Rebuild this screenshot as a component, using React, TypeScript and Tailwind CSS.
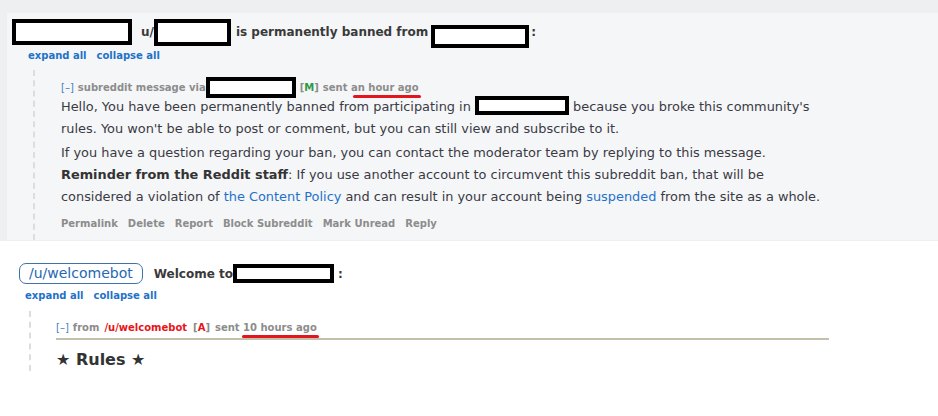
const blueLink = "text-[#1f72c9]";

function Redacted({ className }: { className: string }) {
  return (
    <span
      className={`inline-block shrink-0 border-[4px] border-black bg-white align-middle ${className}`}
    />
  );
}

function Scribble({ className }: { className: string }) {
  return (
    <span
      className={`pointer-events-none absolute h-[3px] rounded-full bg-[#e3161d] ${className}`}
    />
  );
}

function ExpandLinks({ className }: { className: string }) {
  return (
    <div className={`flex gap-[10px] text-[10px] font-bold ${blueLink} ${className}`}>
      <span>expand all</span>
      <span>collapse all</span>
    </div>
  );
}

const ACTIONS = ["Permalink", "Delete", "Report", "Block Subreddit", "Mark Unread", "Reply"];

export default function App() {
  return (
    <div className="min-h-screen bg-white font-['DejaVu_Sans',Verdana,sans-serif] text-[#333]">
      {/* ban message */}
      <div className="bg-[#eeeff1] pl-[7px] pt-[13px]">
        <div className="flex h-[227px] flex-col overflow-hidden bg-[#f5f6f8] pl-[5px]">
          <div className="flex h-[38px] items-center text-[12px] font-bold text-[#3a3a3a]">
            <Redacted className="h-[26px] w-[120px]" />
            <span className="ml-[9px]">u/</span>
            <Redacted className="h-[27px] w-[77px]" />
            <span className="ml-[5px]">is permanently banned from</span>
            <Redacted className="ml-[3px] mt-[8px] h-[23px] w-[98px]" />
            <span className="ml-[2px]">:</span>
          </div>
          <ExpandLinks className="ml-[16px] mt-[-3px]" />
          <div className="ml-[21px] mt-[7px] flex-1 border-l-2 border-dashed border-[#dcdde0] pl-[26px] pt-[7px]">
            <div className="flex items-center text-[10px] font-bold text-[#8c8c8c]">
              <span className="font-normal text-[#3f7fc6]">[–]</span>
              <span className="ml-[4px]">subreddit message via</span>
              <Redacted className="h-[21px] w-[90px]" />
              <span className="ml-[4px]">
                [<span className="text-[#2f9a45]">M</span>]
              </span>
              <span className="relative ml-[4px]">
                sent an hour ago
                <Scribble className="left-[30px] right-[-2px] top-[15px]" />
              </span>
            </div>
            <div className="mt-[-2px] w-[775px] text-[12.9px] leading-[22px] text-[#3a3a44]">
              <p>
                Hello, You have been permanently banned from participating in{" "}
                <Redacted className="mt-[-4px] h-[19px] w-[94px]" /> because you broke this
                community's rules. You won't be able to post or comment, but you can still view
                and subscribe to it.
              </p>
              <p className="mt-[2px]">
                If you have a question regarding your ban, you can contact the moderator team by
                replying to this message.
              </p>
              <p>
                <strong className="text-[#333]">Reminder from the Reddit staff</strong>: If you
                use another account to circumvent this subreddit ban, that will be considered a
                violation of <span className={blueLink}>the Content Policy</span> and can result
                in your account being <span className={blueLink}>suspended</span> from the site as
                a whole.
              </p>
            </div>
            <div className="mt-[8px] flex gap-[10px] text-[10px] font-bold text-[#8c8c8c]">
              {ACTIONS.map((a) => (
                <span key={a}>{a}</span>
              ))}
            </div>
          </div>
        </div>
      </div>
      <div className="h-px bg-[#eeeff1]" />

      {/* welcome message */}
      <div className="pl-[19px] pt-[22px]">
        <div className="flex items-center text-[12px] font-bold text-[#3a3a3a]">
          <span className="flex h-[21px] items-center rounded-[7px] border border-[#3f72b0] px-[9px] text-[14px] font-normal text-[#2467b4]">
            /u/welcomebot
          </span>
          <span className="ml-[11px]">Welcome to</span>
          <Redacted className="h-[19px] w-[101px]" />
          <span className="ml-[4px]">:</span>
        </div>
        <ExpandLinks className="ml-[6px] mt-[4px]" />
        <div className="ml-[10px] mt-[8px] h-[60px] border-l-2 border-dashed border-[#dcdde0] pl-[25px] pt-[9px]">
          <div className="flex items-center text-[10px] font-bold text-[#8c8c8c]">
            <span className="font-normal text-[#3f7fc6]">[–]</span>
            <span className="ml-[4px]">from</span>
            <span className="ml-[5px] text-[#e8141b]">/u/welcomebot</span>
            <span className="ml-[6px]">
              [<span className="text-[#e8141b]">A</span>]
            </span>
            <span className="relative ml-[5px]">
              sent 10 hours ago
              <Scribble className="left-[27px] right-[-2px] top-[15px]" />
            </span>
          </div>
          <div className="mt-[3px] h-[2px] w-[773px] bg-[#c3c1ab]" />
          <div className="mt-[8px] text-[16px] font-bold text-[#333]">★ Rules ★</div>
        </div>
      </div>
    </div>
  );
}
